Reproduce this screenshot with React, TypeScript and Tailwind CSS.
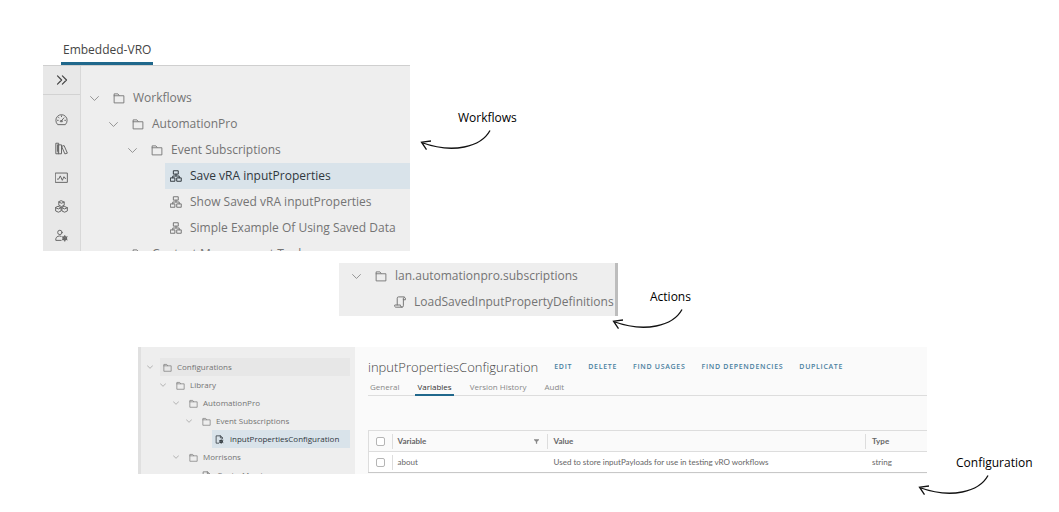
import type { ReactNode } from "react"
import clsx from "clsx"

type IconProps = { className?: string }
type Kind = "folder" | "workflow" | "action" | "config"
type Row = { label: string; level: number; kind: Kind; selected?: boolean; hovered?: boolean }

const workflowRows: Row[] = [
    { label: "Workflows", level: 0, kind: "folder" },
    { label: "AutomationPro", level: 1, kind: "folder" },
    { label: "Event Subscriptions", level: 2, kind: "folder" },
    { label: "Save vRA inputProperties", level: 3, kind: "workflow", selected: true },
    { label: "Show Saved vRA inputProperties", level: 3, kind: "workflow" },
    { label: "Simple Example Of Using Saved Data", level: 3, kind: "workflow" },
    { label: "Content Management Tools", level: 1, kind: "folder" },
]

const actionRows: Row[] = [
    { label: "lan.automationpro.subscriptions", level: 0, kind: "folder" },
    { label: "LoadSavedInputPropertyDefinitions", level: 1, kind: "action" },
]

const configRows: Row[] = [
    { label: "Configurations", level: 0, kind: "folder", hovered: true },
    { label: "Library", level: 1, kind: "folder" },
    { label: "AutomationPro", level: 2, kind: "folder" },
    { label: "Event Subscriptions", level: 3, kind: "folder" },
    { label: "inputPropertiesConfiguration", level: 4, kind: "config", selected: true },
    { label: "Morrisons", level: 2, kind: "folder" },
    { label: "CenterMorrisons", level: 3, kind: "config" },
]

const Icon = ({ className, children }: IconProps & { children: ReactNode }) => (
    <svg
        viewBox="0 0 16 16"
        className={clsx("shrink-0", className)}
        fill="none"
        stroke="currentColor"
        strokeWidth="1.2"
        strokeLinejoin="round"
        strokeLinecap="round"
        aria-hidden="true"
    >
        {children}
    </svg>
)

const ChevronIcon = ({ className }: IconProps) => (
    <Icon className={className}><path d="M1 4.5l7 7 7-7" strokeWidth="1.6" /></Icon>
)

const kindIcons: Record<Kind, (props: IconProps) => ReactNode> = {
    folder: ({ className }) => (
        <Icon className={className}>
            <path d="M1.500 14V2.500h5L8.500 5h6v9zM1.500 5H8" strokeWidth="1.2" />
        </Icon>
    ),
    workflow: ({ className }) => (
        <Icon className={className}>
            <path d="M5 1h6v4.500H5zM1 10.500h5.500V15H1zM9.500 10.500H15V15H9.500zM8 5.500V8M3.700 10.500V8h8.600v2.500" strokeWidth="1.3" />
        </Icon>
    ),
    action: ({ className }) => (
        <Icon className={className}>
            <path d="M12.500 4.500V2.800a1.500 1.500 0 0 1 2.700 0v1.700zM13.500 1.200H6a1.700 1.700 0 0 0-1.700 1.700v9M12.500 4.500V13a1.900 1.900 0 0 1-1.900 1.900H2.800A1.900 1.900 0 0 1 1 12h7.700v1a1.900 1.900 0 0 0 1.900 1.900" strokeWidth="1.3" />
        </Icon>
    ),
    config: ({ className }) => (
        <Icon className={className}>
            <path d="M6.500 14.500H2v-13h8L13 4.500v2.500M9.500 1.500V5H13" strokeWidth="1.4" />
            <circle cx="11" cy="11.500" r="2.300" strokeWidth="1.800" />
            <path d="M11 7.500v8M7.500 9.500l7 4M7.500 13.500l7-4" strokeWidth="0.9" />
        </Icon>
    ),
}

const sideIcons: { name: string; art: ReactNode }[] = [
    {
        name: "Dashboard",
        art: <path d="M3 14a7 7 0 1 1 10 0zM8 9.500l3-3.500M8 3.500v1M3 9h1M12 9h1M4.500 5.500l.6.6M7 9.500h2v1.200H7z" />,
    },
    {
        name: "Library",
        art: <path d="M1.500 1.500h3v13h-3zM4.500 3.500H8v11H4.500zM8.600 5.200l2.600-.8 4 9.300-2.600.8zM3 3.500v8" />,
    },
    {
        name: "Activity",
        art: <path d="M.8 2.500h14.400v11.500H.8zM3 10h1.500L6.500 6l2.500 5.500 2-4.500 1.200 2H13" />,
    },
    {
        name: "Assets",
        art: (
            <path d="M8 1l3.300 1.500v4L8 8 4.700 6.500v-4zM4.700 2.500L8 4l3.300-1.500M4.200 8l3.300 1.500v4L4.200 15 .8 13.500v-4zM.8 9.500l3.400 1.500 3.300-1.500M11.800 8l3.400 1.500v4L11.800 15l-3.300-1.500v-4zM8.500 9.500l3.300 1.500 3.400-1.500" />
        ),
    },
    {
        name: "Administration",
        art: (
            <>
                <path d="M7.500 14H1v-2A4.500 4.500 0 0 1 7.500 9" />
                <circle cx="6" cy="4.200" r="2.700" />
                <circle cx="12" cy="11.500" r="2.100" strokeWidth="1.800" />
                <path d="M12 8v7M9 9.700l6 3.600M9 13.300l6-3.600" />
            </>
        ),
    },
]

const indents = {
    regular: ["pl-[9px]", "pl-[28px]", "pl-[47px]", "pl-[66px]"],
    compact: ["pl-[6px]", "pl-[19px]", "pl-[32px]", "pl-[45px]", "pl-[58px]"],
}

const Tree = ({ rows, compact, label }: { rows: Row[]; compact?: boolean; label: string }) => (
    <ul aria-label={label} className={compact ? "text-[8px] leading-[18px]" : "text-[12px] leading-[26px]"}>
        {rows.map((row) => {
            const KindIcon = kindIcons[row.kind]
            return (
                <li
                    key={row.label}
                    className={clsx(
                        "flex items-center whitespace-nowrap",
                        (compact ? indents.compact : indents.regular)[row.level],
                        row.selected ? "text-[#30383e]" : "text-[#747474]"
                    )}
                >
                    <span className={clsx("flex items-center text-[#8a8a8a]", compact ? "w-[13px]" : "w-[18px]")}>
                        {row.kind === "folder" && (
                            <ChevronIcon className={compact ? "size-[6px]" : "size-[9px]"} />
                        )}
                    </span>
                    <span
                        className={clsx(
                            "flex flex-1 items-center",
                            compact ? "pl-[3px]" : "gap-2 pl-[5px]",
                            compact && (row.kind === "folder" ? "gap-[5px]" : "gap-[6px]"),
                            row.selected && "bg-[#d9e3ea]",
                            row.hovered && "bg-[#e7e7e7]"
                        )}
                    >
                        <KindIcon className={compact ? "size-[9px]" : "size-[12px]"} />
                        {row.label}
                    </span>
                </li>
            )
        })}
    </ul>
)

const Callout = ({ children, className }: { children: ReactNode; className?: string }) => (
    <figcaption className={clsx("text-[12px] leading-[18px] text-black", className)}>
        <p className="pl-[38px]">{children}</p>
        <svg viewBox="0 0 72 22" className="mt-[2px] h-[22px] w-[72px]" fill="none" stroke="#111" strokeWidth="1.3" aria-hidden="true">
            <path d="M70 1.500C61 18 33 25 1.500 13.500M11 12L1.500 13.200l5 7.500" />
        </svg>
    </figcaption>
)

const WorkflowsPanel = () => (
    <figure className="grid grid-cols-[43fr_367fr_649fr]">
        <div className="col-start-2">
            <nav className="flex pl-[18px]">
                <button className="border-b-[3px] border-[#20688c] px-[2px] pt-px pb-[3px] text-[12px] leading-[18px] text-[#454545]">
                    Embedded-VRO
                </button>
            </nav>
            <div className="flex h-[186px] overflow-hidden border-t border-[#cfcfcf] bg-[#eeeeee]">
                <nav className="flex w-[38px] shrink-0 flex-col border-r border-[#d8d8d8] bg-[#e8e8e8] text-[#666666]">
                    <button aria-label="Expand menu" className="flex h-[29px] items-center justify-center border-b border-[#d2d2d2] text-[#444444]">
                        <Icon className="size-[12px]"><path d="M2 2.500L7.500 8 2 13.500M8.500 2.500L14 8l-5.500 5.500" strokeWidth="1.6" /></Icon>
                    </button>
                    <div className="flex flex-col pt-[10px]">
                        {sideIcons.map((item) => (
                            <button key={item.name} aria-label={item.name} className="flex h-[29px] items-center justify-center">
                                <Icon className="size-[13px]">{item.art}</Icon>
                            </button>
                        ))}
                    </div>
                </nav>
                <div className="flex-1 pt-[19px]">
                    <Tree rows={workflowRows} label="Workflows" />
                </div>
            </div>
        </div>
        <Callout className="pt-[69px] pl-[10px]">Workflows</Callout>
    </figure>
)

const ActionsPanel = () => (
    <figure className="mt-3 grid grid-cols-[339fr_279fr_441fr] items-start">
        <div className="col-start-2 overflow-hidden border-r-[3px] border-[#bdbdbd] bg-[#eeeeee] pb-px pl-1">
            <Tree rows={actionRows} label="Actions" />
        </div>
        <Callout className="-ml-[6px] pt-[25px]">Actions</Callout>
    </figure>
)

const commands = ["Edit", "Delete", "Find usages", "Find dependencies", "Duplicate"]
const tabs = ["General", "Variables", "Version History", "Audit"]

const Check = ({ label }: { label: string }) => (
    <input
        type="checkbox"
        aria-label={label}
        className="block size-[9px] appearance-none rounded-[2px] border border-[#b5b5b5] bg-white"
    />
)

const VariablesTable = () => (
    <table className="w-full table-fixed border-l border-[#dddddd] text-left font-['Lato','Open_Sans',sans-serif] text-[8px] text-[#666666]">
        <colgroup>
            <col className="w-[23px]" />
            <col className="w-[155px]" />
            <col />
            <col className="w-[62px]" />
        </colgroup>
        <thead>
            <tr className="h-[21px] border-y border-[#dddddd]">
                <th className="pl-[7px]"><Check label="Select all variables" /></th>
                <th>
                    <div className="flex h-[15px] items-center justify-between border-l border-[#dddddd] pr-2 pl-[5px] font-bold">
                        Variable
                        <svg viewBox="0 0 8 8" className="size-[5px]" fill="#888" aria-hidden="true">
                            <path d="M0 0.500h8v1L5 4.500V8L3 7V4.500L0 1.500z" />
                        </svg>
                    </div>
                </th>
                <th><div className="flex h-[15px] items-center border-l border-[#dddddd] pl-[6px] font-bold">Value</div></th>
                <th><div className="flex h-[15px] items-center border-l border-[#dddddd] pl-[6px] font-bold">Type</div></th>
            </tr>
        </thead>
        <tbody>
            <tr className="h-[21px] border-b border-[#c8c8c8] bg-white">
                <td className="pl-[7px]"><Check label="Select about" /></td>
                <td><div className="flex h-[15px] items-center border-l border-[#dddddd] pl-[5px]">about</div></td>
                <td className="pl-[7px]">Used to store inputPayloads for use in testing vRO workflows</td>
                <td className="pl-[7px]">string</td>
            </tr>
        </tbody>
    </table>
)

const ConfigurationPanel = () => (
    <figure className="mt-[17px] grid grid-cols-[138fr_789fr_132fr] items-start">
        <div className="col-start-2 flex h-[127px] overflow-hidden bg-[#fafafa]">
            <div className="w-[217px] shrink-0 border-l-[3px] border-[#e0e0e0] bg-[#eeeeee] pt-[11px] pr-[5px]">
                <Tree rows={configRows} compact label="Configurations" />
            </div>
            <div className="min-w-0 flex-1 pl-[13px]">
                <header className="flex items-center gap-4 pt-[10px]">
                    <h2 className="text-[13px] leading-[20px] font-light text-[#444444]">inputPropertiesConfiguration</h2>
                    {commands.map((command) => (
                        <button key={command} className="pt-px text-[7px] font-semibold tracking-widest whitespace-nowrap text-[#4a80a0] uppercase">
                            {command}
                        </button>
                    ))}
                </header>
                <nav className="flex gap-[14px] border-b border-[#dddddd] text-[8px] leading-[15px] text-[#888888]">
                    {tabs.map((tab) => (
                        <button
                            key={tab}
                            className={clsx(
                                "-mb-px border-b-2 px-[2px] pt-[2px]",
                                tab === "Variables" ? "border-[#20688c] text-[#333333]" : "border-transparent"
                            )}
                        >
                            {tab}
                        </button>
                    ))}
                </nav>
                <div className="pt-[34px]">
                    <VariablesTable />
                </div>
            </div>
        </div>
        <Callout className="-ml-[9px] pt-[107px]">Configuration</Callout>
    </figure>
)

export default function App() {
    return (
        <main className="overflow-x-hidden bg-white pt-[40px] font-['Open_Sans','Noto_Sans',sans-serif]">
            <WorkflowsPanel />
            <ActionsPanel />
            <ConfigurationPanel />
        </main>
    )
}
